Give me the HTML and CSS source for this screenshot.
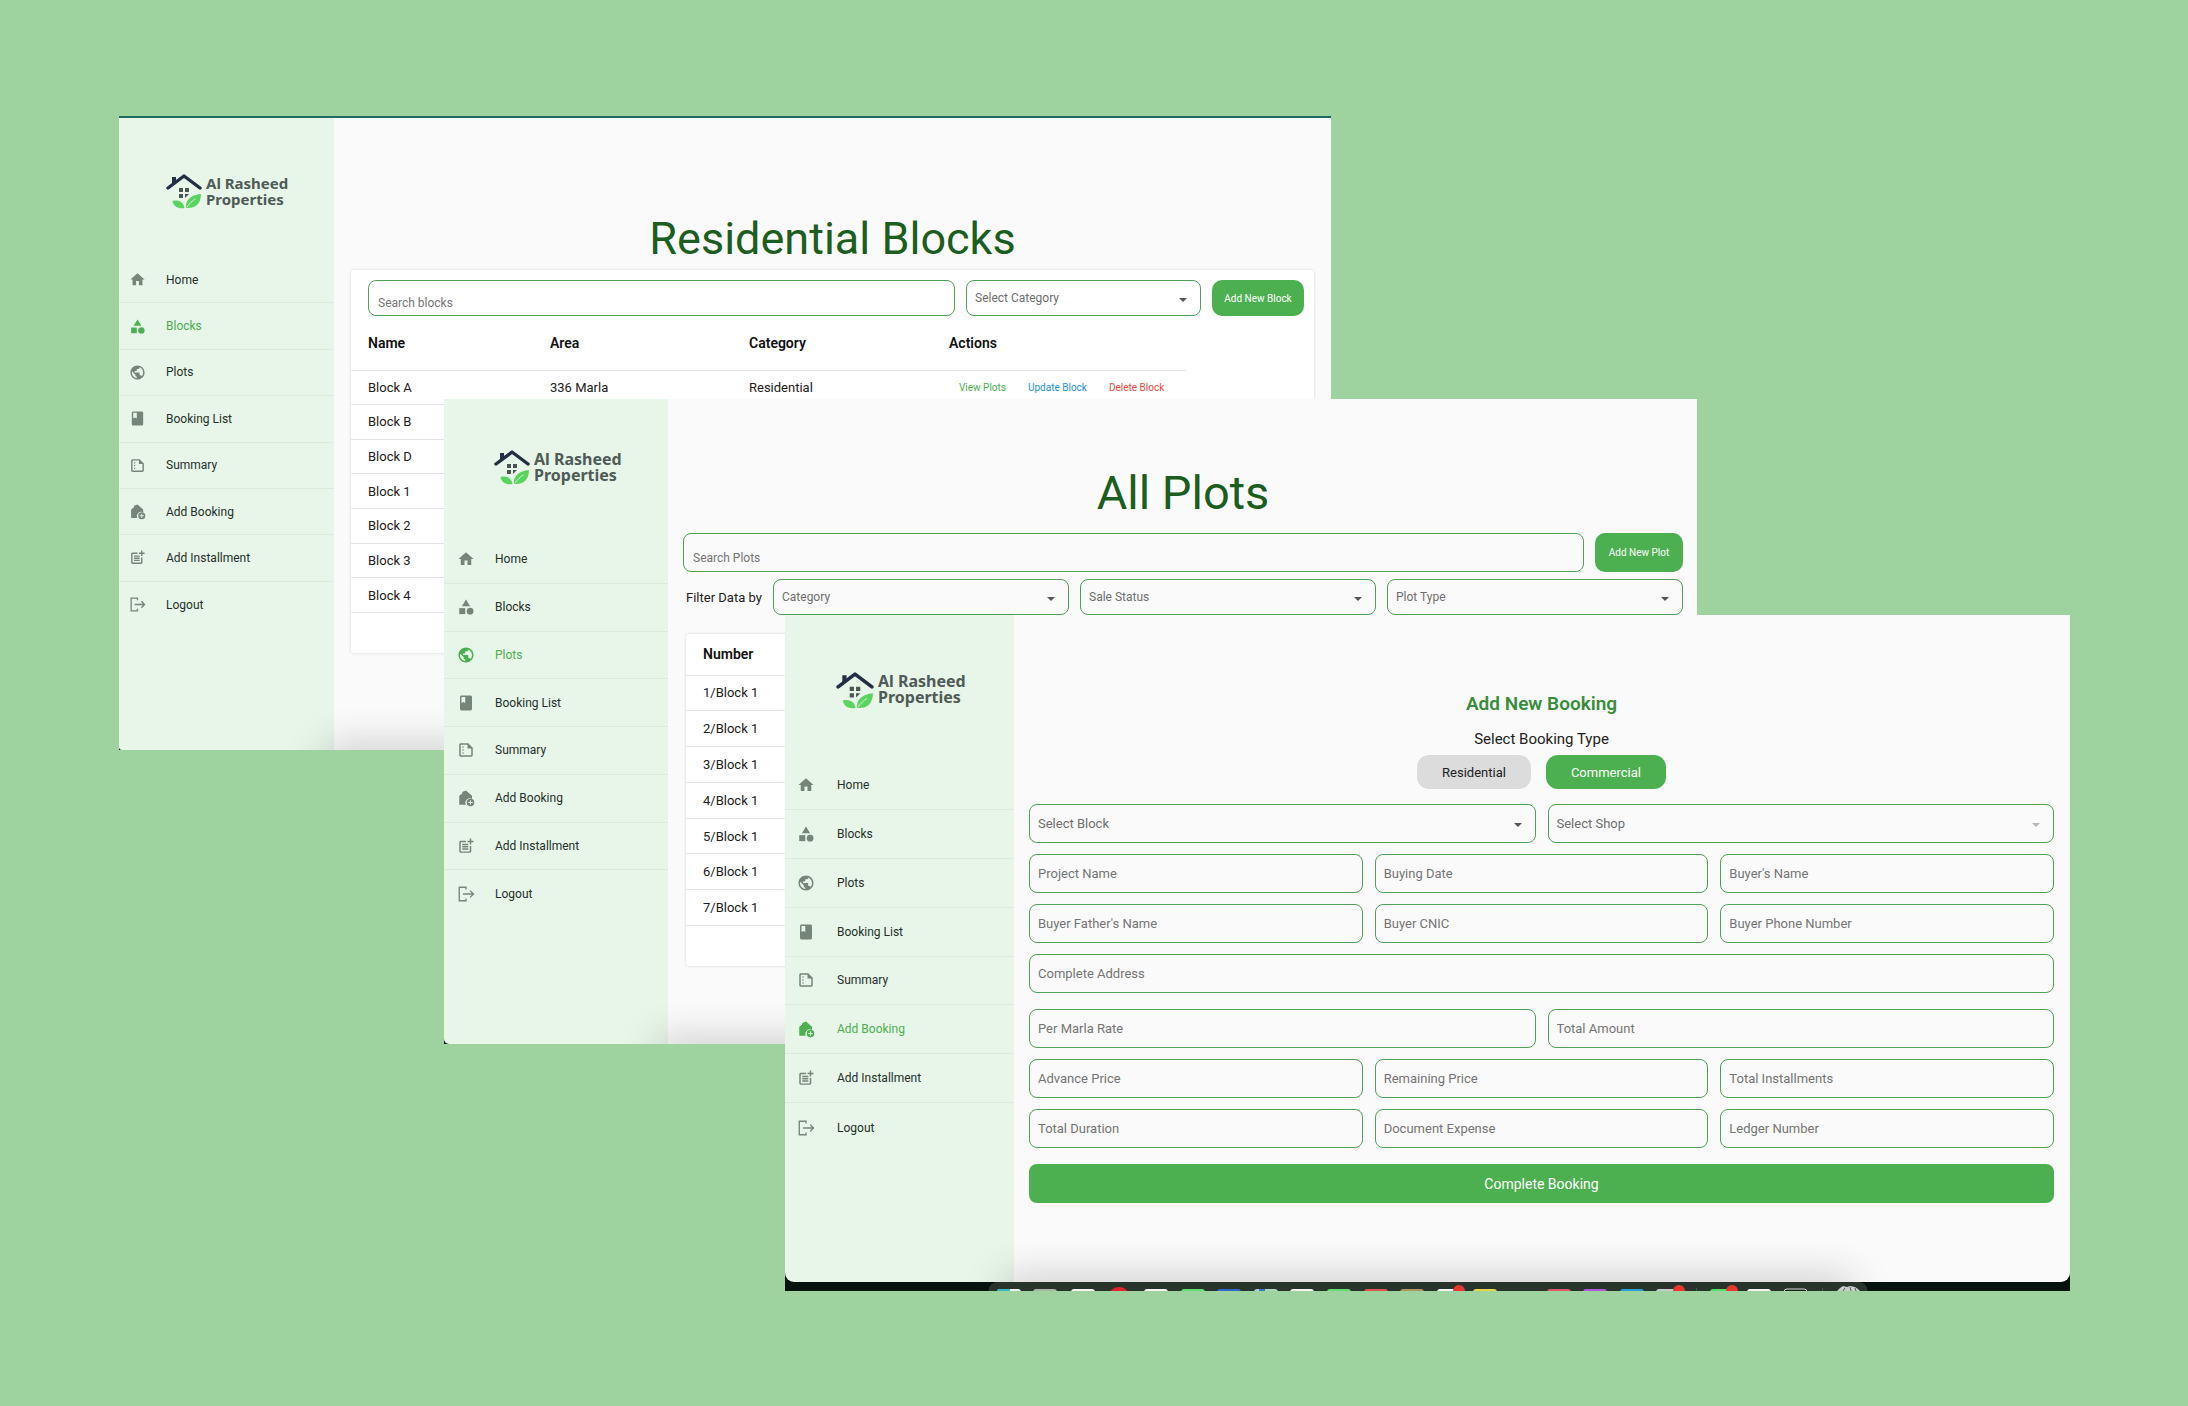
FILE: index.html
```html
<!DOCTYPE html>
<html lang="en">
<head>
    <meta charset="UTF-8">
    <meta name="viewport" content="width=device-width, initial-scale=1.0">
    <title>Al Rasheed Properties</title>
    <link rel="stylesheet" href="styles.css">
</head>
<body>
    <!-- Shared icons -->
    <svg class="sprite" aria-hidden="true">
        <symbol id="logo" viewBox="0 0 36 36">
            <path d="M2 15 18 3l16 12" fill="none" stroke="#232f45" stroke-width="3.4" stroke-linecap="round" stroke-linejoin="round"/>
            <path d="M6 4h4v5l-4 3z" fill="#232f45"/>
            <path d="M13 15h4v4h-4zM19 15h4v4h-4zM13 21h4v4h-4zM19 21h4l-4 4z" fill="#4a5450"/>
            <path d="M6.500 28c6-1.500 11 1 12 7-6 1-11-1-12-7z" fill="#5bd45f"/>
            <path d="M20 35c-1-8 5-13 15-14 0 9-5 15-15 14z" fill="#5bd45f"/>
            <path d="M20.500 34.500c3-4 6-7 9-8.500" fill="none" stroke="#e8f5e9" stroke-width=".8"/>
        </symbol>
        <symbol id="home" viewBox="0 0 24 24"><path d="M10 20v-6h4v6h5v-8h3L12 3 2 12h3v8z"/></symbol>
        <symbol id="blocks" viewBox="0 0 24 24"><path d="M12 2l-5.500 9h11z"/><circle cx="17.500" cy="17.500" r="4.500"/><path d="M3 13.500h8v8H3z"/></symbol>
        <symbol id="plots" viewBox="0 0 24 24"><path d="M12 2C6.480 2 2 6.480 2 12s4.480 10 10 10 10-4.480 10-10S17.520 2 12 2zm-1 17.930c-3.950-.49-7-3.850-7-7.930 0-.62.08-1.210.21-1.790L9 15v1c0 1.100.9 2 2 2v1.930zm6.900-2.540c-.26-.81-1-1.390-1.900-1.390h-1v-3c0-.55-.45-1-1-1H8v-2h2c.55 0 1-.45 1-1V7h2c1.100 0 2-.9 2-2v-.41c2.930 1.190 5 4.060 5 7.410 0 2.080-.8 3.970-2.100 5.390z"/></symbol>
        <symbol id="book" viewBox="0 0 24 24"><path d="M18 2H6c-1.100 0-2 .9-2 2v16c0 1.100.9 2 2 2h12c1.100 0 2-.9 2-2V4c0-1.100-.9-2-2-2zM6 4h5v8l-2.500-1.500L6 12V4z"/></symbol>
        <symbol id="summary" viewBox="0 0 24 24"><path fill-rule="evenodd" d="M15 3H5c-1.100 0-2 .9-2 2v14c0 1.100.9 2 2 2h14c1.100 0 2-.9 2-2V9l-6-6zM5 19V5h9v5h5v9H5z"/><circle cx="8" cy="8" r="1"/><circle cx="8" cy="12" r="1"/><circle cx="8" cy="16" r="1"/></symbol>
        <symbol id="add-home" viewBox="0 0 24 24"><path d="M3 21V9l4-3V4l5-2 8 7v4.200a6 6 0 0 0-8.300 7.800z"/><path fill-rule="evenodd" d="M18 13a5 5 0 1 0 0 10 5 5 0 0 0 0-10zm3 5.600h-2.400V21h-1.200v-2.400H15v-1.200h2.400V15h1.200v2.400H21z"/></symbol>
        <symbol id="post-add" viewBox="0 0 24 24"><path d="M17 19.220H5V7h7V5H5c-1.100 0-2 .9-2 2v12c0 1.100.9 2 2 2h12c1.100 0 2-.9 2-2v-7h-2v7.220zM19 2h-2v3h-3v2h3v3h2V7h3V5h-3V2zM7 9h8v2H7zM7 12h8v2H7zM7 15h8v2H7z"/></symbol>
        <symbol id="logout" viewBox="0 0 24 24"><path d="M12 6V3H3v18h9v-3M8 12h14M17.500 7.500 22 12l-4.500 4.500" fill="none" stroke="currentColor" stroke-width="1.800"/></symbol>
    </svg>

    <div class="canvas">
        <!-- Residential blocks -->
        <section class="window window-blocks">
            <aside class="sidebar">
                <div class="brand">
                    <svg><use href="#logo"/></svg>
                    <span>Al Rasheed<br>Properties</span>
                </div>
                <nav class="menu">
                    <a href="#"><svg><use href="#home"/></svg>Home</a>
                    <a href="#" class="active"><svg><use href="#blocks"/></svg>Blocks</a>
                    <a href="#"><svg><use href="#plots"/></svg>Plots</a>
                    <a href="#"><svg><use href="#book"/></svg>Booking List</a>
                    <a href="#"><svg><use href="#summary"/></svg>Summary</a>
                    <a href="#"><svg><use href="#add-home"/></svg>Add Booking</a>
                    <a href="#"><svg><use href="#post-add"/></svg>Add Installment</a>
                    <a href="#"><svg><use href="#logout"/></svg>Logout</a>
                </nav>
            </aside>
            <main class="content">
                <h1>Residential Blocks</h1>
                <div class="card">
                    <div class="toolbar">
                        <input class="field search" type="text" placeholder="Search blocks" aria-label="Search blocks">
                        <select class="field" aria-label="Select Category"><option>Select Category</option></select>
                        <button class="add-btn">Add New Block</button>
                    </div>
                    <table>
                        <thead>
                            <tr><th class="col-name">Name</th><th class="col-area">Area</th><th class="col-category">Category</th><th>Actions</th></tr>
                        </thead>
                        <tbody>
                            <tr>
                                <td>Block A</td>
                                <td>336 Marla</td>
                                <td>Residential</td>
                                <td>
                                    <div class="actions">
                                        <button class="view">View Plots</button>
                                        <button class="update">Update Block</button>
                                        <button class="delete">Delete Block</button>
                                    </div>
                                </td>
                            </tr>
                            <tr><td>Block B</td><td></td><td></td><td></td></tr>
                            <tr><td>Block D</td><td></td><td></td><td></td></tr>
                            <tr><td>Block 1</td><td></td><td></td><td></td></tr>
                            <tr><td>Block 2</td><td></td><td></td><td></td></tr>
                            <tr><td>Block 3</td><td></td><td></td><td></td></tr>
                            <tr><td>Block 4</td><td></td><td></td><td></td></tr>
                        </tbody>
                    </table>
                </div>
            </main>
        </section>

        <!-- All plots -->
        <section class="window window-plots">
            <aside class="sidebar">
                <div class="brand">
                    <svg><use href="#logo"/></svg>
                    <span>Al Rasheed<br>Properties</span>
                </div>
                <nav class="menu">
                    <a href="#"><svg><use href="#home"/></svg>Home</a>
                    <a href="#"><svg><use href="#blocks"/></svg>Blocks</a>
                    <a href="#" class="active"><svg><use href="#plots"/></svg>Plots</a>
                    <a href="#"><svg><use href="#book"/></svg>Booking List</a>
                    <a href="#"><svg><use href="#summary"/></svg>Summary</a>
                    <a href="#"><svg><use href="#add-home"/></svg>Add Booking</a>
                    <a href="#"><svg><use href="#post-add"/></svg>Add Installment</a>
                    <a href="#"><svg><use href="#logout"/></svg>Logout</a>
                </nav>
            </aside>
            <main class="content">
                <h1>All Plots</h1>
                <div class="toolbar">
                    <input class="field search" type="text" placeholder="Search Plots" aria-label="Search Plots">
                    <button class="add-btn">Add New Plot</button>
                </div>
                <div class="filters">
                    <span>Filter Data by</span>
                    <select class="field" aria-label="Category"><option>Category</option></select>
                    <select class="field" aria-label="Sale Status"><option>Sale Status</option></select>
                    <select class="field" aria-label="Plot Type"><option>Plot Type</option></select>
                </div>
                <div class="card">
                    <table>
                        <thead>
                            <tr><th>Number</th></tr>
                        </thead>
                        <tbody>
                            <tr><td>1/Block 1</td></tr>
                            <tr><td>2/Block 1</td></tr>
                            <tr><td>3/Block 1</td></tr>
                            <tr><td>4/Block 1</td></tr>
                            <tr><td>5/Block 1</td></tr>
                            <tr><td>6/Block 1</td></tr>
                            <tr><td>7/Block 1</td></tr>
                        </tbody>
                    </table>
                </div>
            </main>
        </section>

        <!-- Add booking -->
        <div class="desktop">
            <section class="window window-booking">
                <aside class="sidebar">
                    <div class="brand">
                        <svg><use href="#logo"/></svg>
                        <span>Al Rasheed<br>Properties</span>
                    </div>
                    <nav class="menu">
                        <a href="#"><svg><use href="#home"/></svg>Home</a>
                        <a href="#"><svg><use href="#blocks"/></svg>Blocks</a>
                        <a href="#"><svg><use href="#plots"/></svg>Plots</a>
                        <a href="#"><svg><use href="#book"/></svg>Booking List</a>
                        <a href="#"><svg><use href="#summary"/></svg>Summary</a>
                        <a href="#" class="active"><svg><use href="#add-home"/></svg>Add Booking</a>
                        <a href="#"><svg><use href="#post-add"/></svg>Add Installment</a>
                        <a href="#"><svg><use href="#logout"/></svg>Logout</a>
                    </nav>
                </aside>
                <main class="content">
                    <h2>Add New Booking</h2>
                    <p class="subtitle">Select Booking Type</p>
                    <div class="types">
                        <button>Residential</button>
                        <button class="selected">Commercial</button>
                    </div>
                    <form class="form">
                        <div class="row">
                            <select class="field" aria-label="Select Block"><option>Select Block</option></select>
                            <select class="field" aria-label="Select Shop" disabled><option>Select Shop</option></select>
                        </div>
                        <div class="row">
                            <input class="field" type="text" placeholder="Project Name" aria-label="Project Name">
                            <input class="field" type="text" placeholder="Buying Date" aria-label="Buying Date">
                            <input class="field" type="text" placeholder="Buyer's Name" aria-label="Buyer's Name">
                        </div>
                        <div class="row">
                            <input class="field" type="text" placeholder="Buyer Father's Name" aria-label="Buyer Father's Name">
                            <input class="field" type="text" placeholder="Buyer CNIC" aria-label="Buyer CNIC">
                            <input class="field" type="text" placeholder="Buyer Phone Number" aria-label="Buyer Phone Number">
                        </div>
                        <div class="row address">
                            <input class="field" type="text" placeholder="Complete Address" aria-label="Complete Address">
                        </div>
                        <div class="row">
                            <input class="field" type="text" placeholder="Per Marla Rate" aria-label="Per Marla Rate">
                            <input class="field" type="text" placeholder="Total Amount" aria-label="Total Amount">
                        </div>
                        <div class="row">
                            <input class="field" type="text" placeholder="Advance Price" aria-label="Advance Price">
                            <input class="field" type="text" placeholder="Remaining Price" aria-label="Remaining Price">
                            <input class="field" type="text" placeholder="Total Installments" aria-label="Total Installments">
                        </div>
                        <div class="row">
                            <input class="field" type="text" placeholder="Total Duration" aria-label="Total Duration">
                            <input class="field" type="text" placeholder="Document Expense" aria-label="Document Expense">
                            <input class="field" type="text" placeholder="Ledger Number" aria-label="Ledger Number">
                        </div>
                        <button type="button" class="submit">Complete Booking</button>
                    </form>
                </main>
            </section>
            <!-- Top edge of the dock -->
            <svg class="dock" width="880" height="9" viewBox="0 0 880 9" aria-hidden="true">
                <path d="M0 9Q2 0 10 0H870Q878 0 880 9z" fill="#28332c"/>
                <rect x="9" y="7" width="24" height="6" rx="3" fill="#eef2f2"/>
                <path d="M9 9q0-2 3-2h10v2z" fill="#36b8c4"/>
                <rect x="45" y="7" width="24" height="6" rx="3" fill="#a9b3a9"/>
                <rect x="83" y="7" width="24" height="6" rx="3" fill="#f4f4f4"/>
                <circle cx="131" cy="16" r="11" fill="#e0242b"/>
                <rect x="156" y="7" width="24" height="6" rx="3" fill="#f4f4f4"/>
                <rect x="193" y="7" width="24" height="6" rx="3" fill="#5fe070"/>
                <rect x="229" y="7" width="24" height="6" rx="3" fill="#2f68c8"/>
                <rect x="266" y="7" width="24" height="6" rx="3" fill="#a9d5b8"/>
                <rect x="271" y="7" width="6" height="2" fill="#2f78d8"/>
                <rect x="302" y="7" width="24" height="6" rx="3" fill="#f4f4f4"/>
                <rect x="339" y="7" width="24" height="6" rx="3" fill="#5fe070"/>
                <rect x="376" y="7" width="24" height="6" rx="3" fill="#e0564e"/>
                <rect x="412" y="7" width="24" height="6" rx="3" fill="#b09660"/>
                <rect x="449" y="7" width="24" height="6" rx="3" fill="#f4f4f4"/>
                <circle cx="471" cy="9" r="6" fill="#e8382e"/>
                <rect x="485" y="7" width="24" height="6" rx="3" fill="#e4d648"/>
                <rect x="559" y="7" width="24" height="6" rx="3" fill="#e0566a"/>
                <rect x="595" y="7" width="24" height="6" rx="3" fill="#b058d8"/>
                <rect x="632" y="7" width="24" height="6" rx="3" fill="#2a9fd8"/>
                <rect x="668" y="7" width="24" height="6" rx="3" fill="#c4ccd0"/>
                <circle cx="691" cy="9" r="6" fill="#e8382e"/>
                <rect x="708" y="6" width="1" height="3" fill="#4a544e"/>
                <rect x="722" y="7" width="24" height="6" rx="3" fill="#52e068"/>
                <circle cx="744" cy="9" r="6" fill="#e8382e"/>
                <rect x="759" y="7" width="24" height="6" rx="3" fill="#f4f4f4"/>
                <rect x="796" y="7" width="23" height="6" rx="3" fill="#1c2420" stroke="#d8dcd8"/>
                <rect x="834" y="6" width="1" height="3" fill="#4a544e"/>
                <path d="M849 9l3-3 3-2 4 1 3-1 5 1 3 2 2 2z" fill="#c8ccca"/>
                <path d="M855 9l2-3M862 5l1 4M867 6l1 3" stroke="#59625d" fill="none"/>
            </svg>
        </div>
    </div>
</body>
</html>
```

FILE: styles.css
```css
* {
    box-sizing: border-box;
}
body {
    margin: 0;
    background-color: #9ed29e;
    font-family: Roboto, sans-serif;
    color: #212121;
}
button, input, select {
    font-family: inherit;
    font-size: inherit;
    color: inherit;
    margin: 0;
}
button {
    border: none;
    cursor: pointer;
    padding: 0;
    white-space: nowrap;
}
.sprite {
    display: none;
}
.canvas {
    position: relative;
    min-height: 1406px;
    overflow: hidden;
}

/* Windows overlap each other on the canvas */
.window {
    display: flex;
    background-color: #06120e;
    overflow: hidden;
}
.window-blocks {
    position: absolute;
    top: 116px;
    left: 119px;
    right: 857px;
    min-height: 634px;
    border-top: 2px solid #1f6b62;
    font-size: 12px;
}
.window-plots {
    position: absolute;
    top: 399px;
    left: 444px;
    right: 491px;
    min-height: 645px;
    font-size: 12px;
}
.desktop {
    position: absolute;
    top: 615px;
    left: 785px;
    right: 118px;
    background-color: #06120e;
}
.window-booking {
    position: relative;
    min-height: 667px;
    font-size: 13px;
}
.dock {
    display: block;
    margin: 0 auto;
}

/* Dock shadow on the bottom of each window */
.window::after {
    content: "";
    position: absolute;
    left: 17%;
    right: 17%;
    bottom: -20px;
    height: 20px;
    box-shadow: 0 0 40px rgba(0, 0, 0, 0.3);
    pointer-events: none;
}

/* Sidebar */
.sidebar {
    flex: none;
    width: 215px;
    background-color: #e8f5e9;
    border-bottom-left-radius: 3px;
}
.brand {
    display: flex;
    gap: 4px;
    padding: 55px 0 0 47px;
    height: 139px;
    color: #4f5b57;
    font-family: "Noto Sans", sans-serif;
    font-size: 15px;
    font-weight: 700;
    line-height: 16px;
}
.brand svg {
    width: 36px;
    height: 36px;
}
.brand span {
    padding-top: 2px;
}
.menu {
    display: grid;
    grid-auto-rows: 1fr;
    height: 371px;
}
.menu a {
    display: flex;
    align-items: center;
    gap: 20px;
    padding-left: 10px;
    border-bottom: 1px solid #dcebdf;
    color: #26302a;
    font-size: 12px;
    text-decoration: none;
}
.menu a:last-child {
    border-bottom: none;
}
.menu svg {
    width: 17px;
    height: 17px;
    fill: currentColor;
    color: #75857a;
}
.menu .active, .menu .active svg {
    color: #4caf50;
}
.window-plots .sidebar {
    width: 224px;
    border-bottom-left-radius: 5px;
}
.window-plots .brand {
    padding: 50px 0 0 50px;
    height: 137px;
    font-size: 16px;
}
.window-plots .menu {
    height: 382px;
}
.window-plots .menu a {
    padding-left: 13px;
}
.window-booking .sidebar {
    width: 229px;
    border-bottom-left-radius: 9px;
}
.window-booking .brand {
    padding: 56px 0 0 51px;
    height: 146px;
    font-size: 16px;
}
.window-booking .menu {
    height: 391px;
}
.window-booking .menu a {
    gap: 22px;
    padding-left: 12px;
}
.window-plots .menu svg, .window-booking .menu svg {
    width: 18px;
    height: 18px;
}
.window-booking .brand svg {
    width: 38px;
    height: 38px;
}

/* Content */
.content {
    flex: 1;
    min-width: 0;
    padding: 93px 17px 0;
    background-color: #fafafa;
}
.window-plots .content {
    padding: 66px 14px 0 15px;
}
.window-booking .content {
    padding: 75px 16px 0 15px;
    border-bottom-right-radius: 9px;
}
h1 {
    margin: 0 0 3px;
    font-size: 45px;
    font-weight: 400;
    line-height: 56px;
    text-align: center;
    color: #1b5e20;
}
.window-plots h1 {
    margin-bottom: 12px;
    font-size: 47px;
}
.card {
    background-color: #fff;
    border-radius: 3px;
    box-shadow: 0 0 3px rgba(0, 0, 0, 0.15);
    padding-bottom: 40px;
}
.window-plots .card {
    margin: 19px 3px 0;
}

/* Fields */
.field {
    width: 100%;
    min-width: 0;
    height: 39px;
    padding: 0 8px;
    border: 1px solid #4fa356;
    border-radius: 8px;
    background-color: transparent;
    color: #6f6f6f;
    outline: none;
}
.field::placeholder {
    color: #757575;
    opacity: 1;
}
select.field {
    appearance: none;
    background-image: url("data:image/svg+xml,%3Csvg xmlns='http://www.w3.org/2000/svg' width='8' height='4'%3E%3Cpath d='M0 0h8L4 4z' fill='%23555'/%3E%3C/svg%3E");
    background-repeat: no-repeat;
    background-position: right 13px top 55%;
}
select.field:disabled {
    opacity: 1;
    background-image: url("data:image/svg+xml,%3Csvg xmlns='http://www.w3.org/2000/svg' width='8' height='4'%3E%3Cpath d='M0 0h8L4 4z' fill='%23b5b5b5'/%3E%3C/svg%3E");
}
.field.search {
    padding: 10px 9px 0;
}
.toolbar {
    display: flex;
    gap: 11px;
}
.card .toolbar {
    padding: 10px 10px 0 17px;
}
.card .toolbar .field, .card .add-btn {
    height: 36px;
}
.card .toolbar select {
    flex: none;
    width: 235px;
}
.add-btn {
    flex: none;
    width: 92px;
    height: 39px;
    border-radius: 10px;
    background-color: #4caf50;
    color: #fff;
    font-size: 10px;
}
.window-plots .add-btn {
    width: 88px;
}
.filters {
    display: flex;
    align-items: center;
    gap: 11px;
    margin-top: 7px;
}
.filters span {
    flex: none;
    width: 79px;
    padding-left: 3px;
    font-size: 13px;
    white-space: nowrap;
}
.filters .field {
    height: 36px;
}

/* Tables */
table {
    width: 835px;
    height: 297px;
    table-layout: fixed;
    border-collapse: collapse;
    font-size: 13px;
}
.window-plots table {
    width: 100%;
    height: 292px;
}
th, td {
    padding: 0 0 0 17px;
    text-align: left;
    border-bottom: 1px solid #e4e4e4;
}
th {
    height: 54px;
    font-size: 14px;
    font-weight: 600;
    color: #111;
}
.window-plots th {
    height: 41px;
}
.col-name {
    width: 182px;
}
.col-area {
    width: 199px;
}
.col-category {
    width: 200px;
}
.actions {
    display: flex;
    gap: 22px;
    padding-left: 10px;
}
.actions button {
    background: none;
    font-size: 10px;
}
.actions .view {
    color: #4caf50;
}
.actions .update {
    color: #2490dc;
}
.actions .delete {
    color: #e5483d;
}

/* Booking form */
h2 {
    margin: 0;
    font-size: 19px;
    font-weight: 600;
    line-height: 28px;
    text-align: center;
    color: #388e3c;
}
.subtitle {
    margin: 9px 0 4px;
    font-size: 15px;
    line-height: 24px;
    text-align: center;
}
.types {
    display: flex;
    justify-content: center;
    gap: 15px;
}
.types button {
    height: 34px;
    padding: 0 25px;
    border-radius: 12px;
    background-color: #dcdcdc;
}
.types .selected {
    background-color: #4caf50;
    color: #fff;
}
.form {
    display: flex;
    flex-direction: column;
    gap: 11px;
    margin-top: 15px;
}
.row {
    display: flex;
    gap: 12px;
}
.row.address {
    margin-bottom: 5px;
}
.submit {
    height: 39px;
    margin-top: 5px;
    border-radius: 8px;
    background-color: #4caf50;
    color: #fff;
    font-size: 14px;
}
```
